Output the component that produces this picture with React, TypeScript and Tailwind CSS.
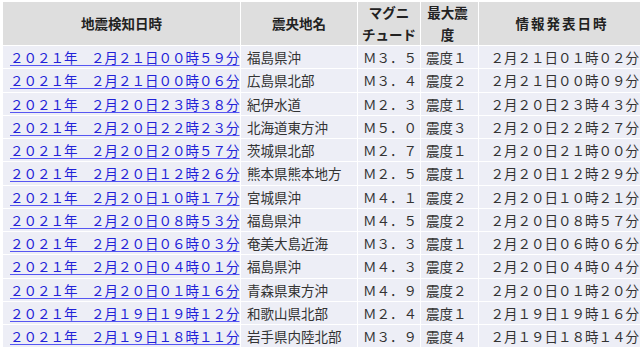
const quakes = [
  ["２０２１年　２月２１日００時５９分", "福島県沖", "Ｍ３．５", "震度１", "２月２１日０１時０２分"],
  ["２０２１年　２月２１日００時０６分", "広島県北部", "Ｍ３．４", "震度２", "２月２１日００時０９分"],
  ["２０２１年　２月２０日２３時３８分", "紀伊水道", "Ｍ２．３", "震度１", "２月２０日２３時４３分"],
  ["２０２１年　２月２０日２２時２３分", "北海道東方沖", "Ｍ５．０", "震度３", "２月２０日２２時２７分"],
  ["２０２１年　２月２０日２０時５７分", "茨城県北部", "Ｍ２．７", "震度１", "２月２０日２１時００分"],
  ["２０２１年　２月２０日１２時２６分", "熊本県熊本地方", "Ｍ２．５", "震度１", "２月２０日１２時２９分"],
  ["２０２１年　２月２０日１０時１７分", "宮城県沖", "Ｍ４．１", "震度２", "２月２０日１０時２１分"],
  ["２０２１年　２月２０日０８時５３分", "福島県沖", "Ｍ４．５", "震度２", "２月２０日０８時５７分"],
  ["２０２１年　２月２０日０６時０３分", "奄美大島近海", "Ｍ３．３", "震度１", "２月２０日０６時０６分"],
  ["２０２１年　２月２０日０４時０１分", "福島県沖", "Ｍ４．３", "震度２", "２月２０日０４時０４分"],
  ["２０２１年　２月２０日０１時１６分", "青森県東方沖", "Ｍ４．９", "震度２", "２月２０日０１時２０分"],
  ["２０２１年　２月１９日１９時１２分", "和歌山県北部", "Ｍ２．４", "震度１", "２月１９日１９時１６分"],
  ["２０２１年　２月１９日１８時１１分", "岩手県内陸北部", "Ｍ３．９", "震度４", "２月１９日１８時１４分"],
];

export default function App() {
  return (
    <div className="w-[640px] h-[350px] overflow-hidden bg-white pt-[1px] pl-[2px] font-['Noto_Sans_CJK_JP',sans-serif] text-[13.5px]">
      <table className="table-fixed border-separate border-spacing-[1px] w-[644px]">
        <colgroup>
          <col className="w-[237px]" />
          <col className="w-[116px]" />
          <col className="w-[62px]" />
          <col className="w-[57px]" />
          <col className="w-[166px]" />
        </colgroup>
        <thead>
          <tr className="bg-[#dedede] text-[#222] font-semibold">
            <th className="h-[43px] p-0 text-center align-middle leading-[21.5px]">地震検知日時</th>
            <th className="h-[43px] p-0 text-center align-middle leading-[21.5px]">震央地名</th>
            <th className="h-[43px] p-0 text-center align-middle leading-[21.5px]">
              マグニ
              <br />
              チュード
            </th>
            <th className="h-[43px] p-0 pr-[4px] text-center align-middle leading-[21.5px]">
              最大震
              <br />度
            </th>
            <th className="h-[43px] p-0 text-center align-middle leading-[21.5px] tracking-[2px]">情報発表日時</th>
          </tr>
        </thead>
        <tbody>
          {quakes.map((q, i) => (
            <tr key={i} className="bg-[#edeef6] text-[#333]">
              <td className="h-[22.25px] p-0 pl-[7px] align-middle leading-[20px] whitespace-nowrap overflow-hidden">
                <a href="#" className="text-[#2222d8] underline decoration-[#5656f2] underline-offset-[2px]">
                  {q[0]}
                </a>
              </td>
              <td className="h-[22.25px] p-0 pl-[6px] align-middle leading-[20px] whitespace-nowrap overflow-hidden">{q[1]}</td>
              <td className="h-[22.25px] p-0 pr-[3px] text-right align-middle leading-[20px] whitespace-nowrap">{q[2]}</td>
              <td className="h-[22.25px] p-0 pl-[5px] align-middle leading-[20px] whitespace-nowrap">{q[3]}</td>
              <td className="h-[22.25px] p-0 pr-[6px] text-right align-middle leading-[20px] whitespace-nowrap">{q[4]}</td>
            </tr>
          ))}
        </tbody>
      </table>
    </div>
  );
}
